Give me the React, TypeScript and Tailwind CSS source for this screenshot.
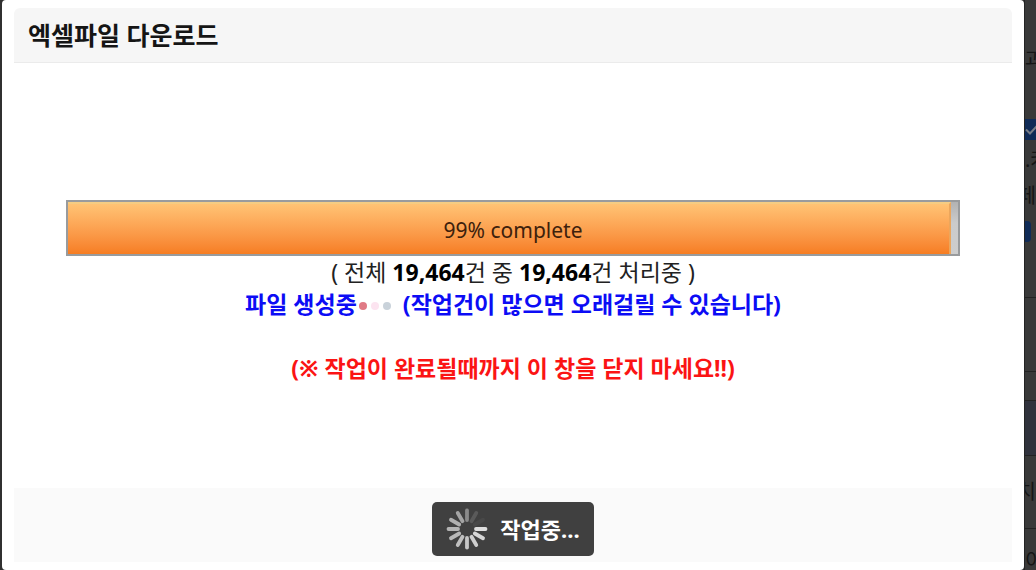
import React from "react";

const SPOKES = [
  { angle: 0, color: "#8a8a8a" },
  { angle: 30, color: "#5a5a5a" },
  { angle: 60, color: "#484848" },
  { angle: 90, color: "#dedede" },
  { angle: 120, color: "#d6d6d6" },
  { angle: 150, color: "#cecece" },
  { angle: 180, color: "#c6c6c6" },
  { angle: 210, color: "#c0c0c0" },
  { angle: 240, color: "#b8b8b8" },
  { angle: 270, color: "#b4b4b4" },
  { angle: 300, color: "#b0b0b0" },
  { angle: 330, color: "#a4a4a4" },
];

function Spinner() {
  return (
    <svg viewBox="0 0 42 42" className="size-[42px] shrink-0" aria-hidden="true">
      {SPOKES.map(({ angle, color }) => (
        <line
          key={angle}
          x1="21"
          y1="2.5"
          x2="21"
          y2="12"
          stroke={color}
          strokeWidth="3.8"
          strokeLinecap="round"
          transform={`rotate(${angle} 21 21)`}
        />
      ))}
    </svg>
  );
}

function ProgressBar({ value }: { value: number }) {
  return (
    <div
      role="progressbar"
      aria-label="엑셀파일 다운로드"
      aria-valuenow={value}
      aria-valuemin={0}
      aria-valuemax={100}
      className="grid h-14 border-2 border-[#999b9d] bg-linear-to-b from-[#b2b2b2] via-[#cbcbcb] via-40% to-[#cdcdcd]"
    >
      <div
        className="col-start-1 row-start-1 box-content border-t-2 border-r-2 border-t-[#f5cc82] border-r-[#eba65c] bg-linear-to-b from-[#ffc374] to-[#f67d22]"
        style={{ width: `${value}%` }}
      />
      <span className="col-start-1 row-start-1 self-center pt-1 text-center text-[21px] leading-7 text-[#3d210c]">
        {value}% complete
      </span>
    </div>
  );
}

function DimmedPage() {
  return (
    <div
      aria-hidden="true"
      className="flex w-3 shrink-0 flex-col overflow-hidden border-l border-[#242424] bg-[#393939] text-[20px] leading-6 whitespace-nowrap text-[#151515]"
    >
      <div className="flex h-[119px] pt-12">과</div>
      <div className="flex h-[21px] items-center bg-[#102b57]">
        <svg viewBox="0 0 11 21" className="h-[21px] w-[11px]">
          <path d="M1 10.5 5 14.5 12 7" fill="none" stroke="#777c86" strokeWidth="2" />
        </svg>
      </div>
      <div className="flex h-11 pt-2">.커</div>
      <div className="flex h-[37px] justify-end">페</div>
      <div className="h-[21px] w-1.5 rounded-r-sm bg-[#102b57]" />
      <div className="h-14 border-b border-[#222222]" />
      <div className="h-[74px] border-b border-[#222222]" />
      <div className="h-[29px] border-b border-[#222222]" />
      <div className="h-[55px] border-b border-[#222222] bg-[#30323c]" />
      <div className="flex h-[73px] justify-end border-b border-[#222222] pt-6">치</div>
      <div className="flex h-10 pt-5">이</div>
    </div>
  );
}

export default function App() {
  return (
    <div className="flex h-screen overflow-hidden bg-[#303030] pl-0.5 font-['Noto_Sans','Noto_Sans_CJK_KR',sans-serif]">
      <section
        role="dialog"
        aria-labelledby="dialog-title"
        className="flex min-w-0 flex-1 flex-col rounded-sm bg-white px-3 py-2"
      >
        <header className="flex h-[55px] shrink-0 items-center rounded-t-md border-b border-[#ebebeb] bg-[#f6f6f6] px-3.5">
          <h1 id="dialog-title" className="text-[25px] leading-8 font-bold text-[#151515]">
            엑셀파일 다운로드
          </h1>
        </header>

        <main className="flex flex-1 flex-col px-[52px] pt-[137px] text-center text-[23px] leading-8">
          <ProgressBar value={99} />
          <p className="text-[#222222]">
            ( 전체 <b className="text-black">19,464</b>건 중 <b className="text-black">19,464</b>건 처리중 )
          </p>
          <p className="flex items-center justify-center font-bold text-[#0c0cf5]">
            파일 생성중
            <span aria-hidden="true" className="mr-3 ml-0.5 flex items-center gap-1 pt-1">
              <i className="size-2 rounded-full bg-[#e07a85]" />
              <i className="size-2 rounded-full bg-[#fce4f0]" />
              <i className="size-2 rounded-full bg-[#c9d2da]" />
            </span>
            (작업건이 많으면 오래걸릴 수 있습니다)
          </p>
          <p className="pt-8 font-bold text-[#fb1414]">(※ 작업이 완료될때까지 이 창을 닫지 마세요!!)</p>
        </main>

        <footer className="flex h-[74px] shrink-0 items-center justify-center bg-[#fafafa] pt-2">
          <button
            type="button"
            className="flex h-[54px] items-center gap-3 rounded-[5px] bg-[#404040] px-3.5 text-[22px] leading-8 font-bold text-white"
          >
            <Spinner />
            작업중...
          </button>
        </footer>
      </section>
      <DimmedPage />
    </div>
  );
}
